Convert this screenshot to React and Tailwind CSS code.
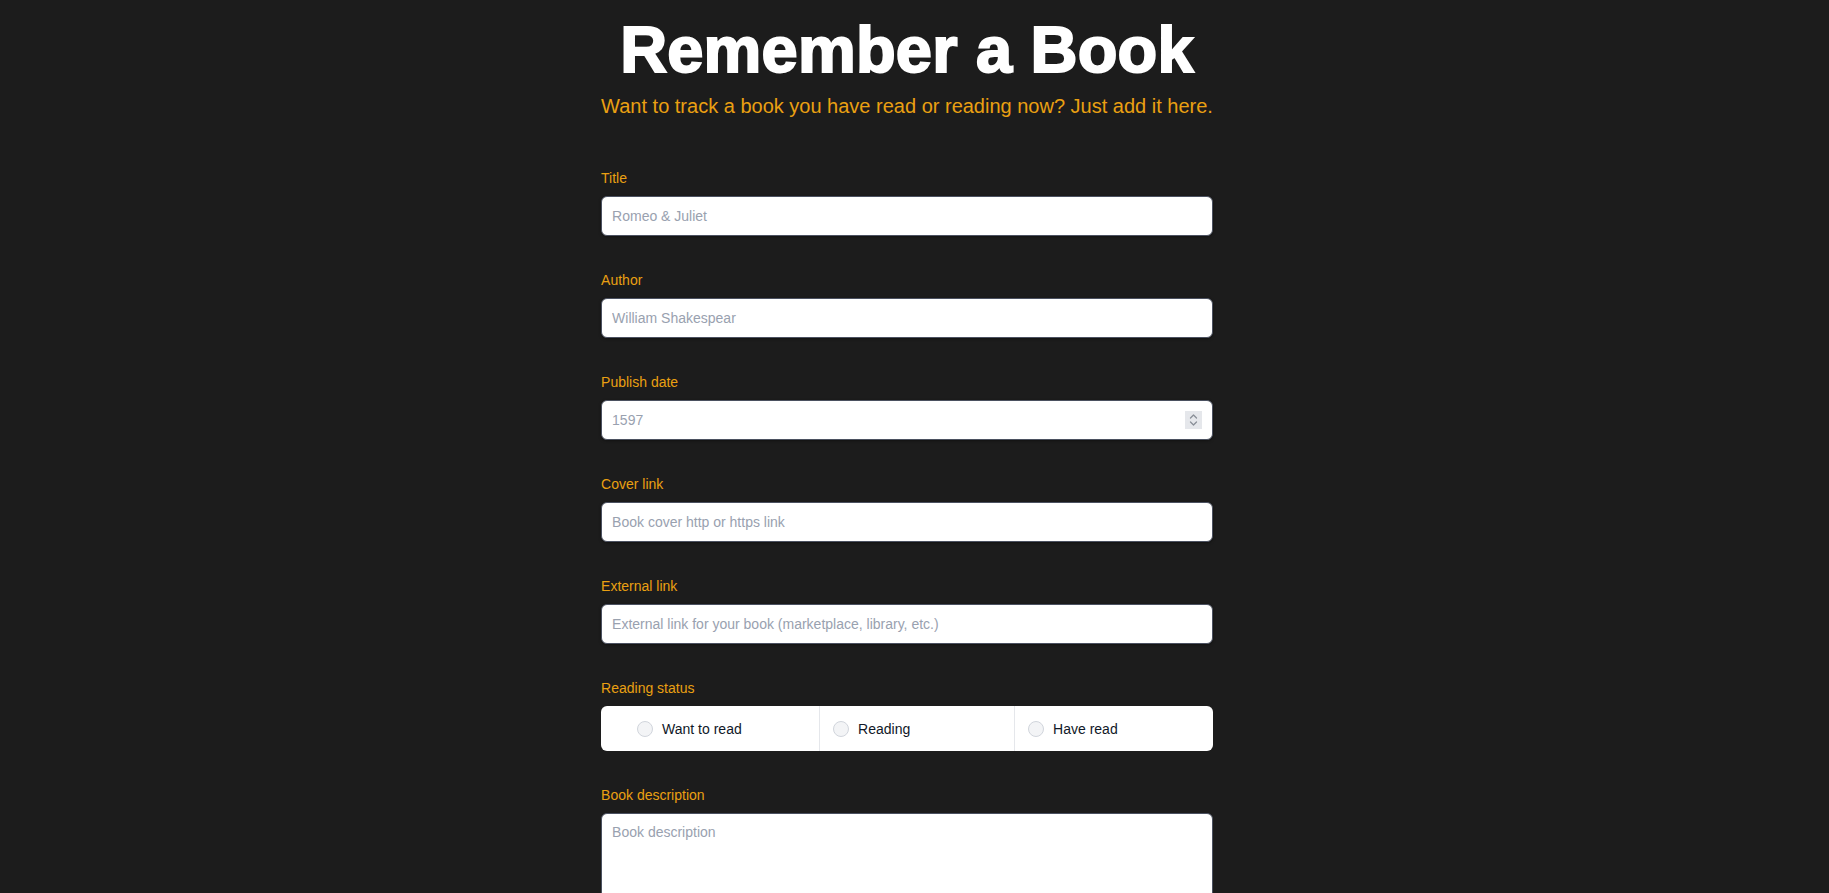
import React from "react";

const font = { fontFamily: '"Liberation Sans", Arial, sans-serif' };

function Field({ label, children }) {
  return (
    <div className="flex flex-col">
      <label className="text-sm leading-5 text-[#eaa012] mb-2">{label}</label>
      {children}
    </div>
  );
}

const inputCls =
  "w-full h-10 rounded-md border border-[#4b5160] bg-white px-2.5 text-sm text-gray-900 placeholder:text-gray-400 outline-none shadow-[0_1px_3px_rgba(0,0,0,0.4)]";

function Radio({ children, className }) {
  return (
    <label className={"flex items-center gap-[9px] " + className}>
      <span className="h-4 w-4 rounded-full border border-gray-300 bg-gray-100" />
      {children}
    </label>
  );
}

export default function App() {
  return (
    <div className="min-h-screen w-full bg-[#1c1c1c] pb-16 pr-[15px]" style={font}>
      <div className="mx-auto w-fit pt-[17px]">
        <h1 className="text-center text-[65px] leading-none font-black tracking-[0.2px] text-white [-webkit-text-stroke:2px_white]">
          Remember a Book
        </h1>
        <p className="mt-[10px] text-xl leading-7 text-[#eaa012]">
          Want to track a book you have read or reading now? Just add it here.
        </p>
        <form className="mt-[48px] flex flex-col gap-[34px]">
          <Field label="Title">
            <input className={inputCls} placeholder="Romeo & Juliet" />
          </Field>
          <Field label="Author">
            <input className={inputCls} placeholder="William Shakespear" />
          </Field>
          <Field label="Publish date">
            <div className="relative">
              <input
                type="text"
                inputMode="numeric"
                className={inputCls}
                placeholder="1597"
              />
              <span className="absolute right-[11px] top-[11px] flex h-[18px] w-[17px] items-center justify-center bg-gray-200">
                <svg width="9" height="14" viewBox="0 0 9 14" fill="none" stroke="#8a8f98" strokeWidth="1.3" strokeLinecap="round" strokeLinejoin="round">
                  <path d="M1.5 5 L4.5 2 L7.5 5" />
                  <path d="M1.5 9 L4.5 12 L7.5 9" />
                </svg>
              </span>
            </div>
          </Field>
          <Field label="Cover link">
            <input className={inputCls} placeholder="Book cover http or https link" />
          </Field>
          <Field label="External link">
            <input
              className={inputCls}
              placeholder="External link for your book (marketplace, library, etc.)"
            />
          </Field>
          <Field label="Reading status">
            <div className="flex h-[45px] w-full rounded-md bg-white text-sm text-gray-900">
              <Radio className="w-[219px] border-r border-gray-200 pl-[36px]">Want to read</Radio>
              <Radio className="w-[195px] border-r border-gray-200 pl-[13px]">Reading</Radio>
              <Radio className="flex-1 pl-[13px]">Have read</Radio>
            </div>
          </Field>
          <Field label="Book description">
            <textarea
              className="h-40 w-full resize-none rounded-md border border-[#4b5160] bg-white px-2.5 py-2 text-sm text-gray-900 placeholder:text-gray-400 outline-none"
              placeholder="Book description"
            />
          </Field>
        </form>
      </div>
    </div>
  );
}
